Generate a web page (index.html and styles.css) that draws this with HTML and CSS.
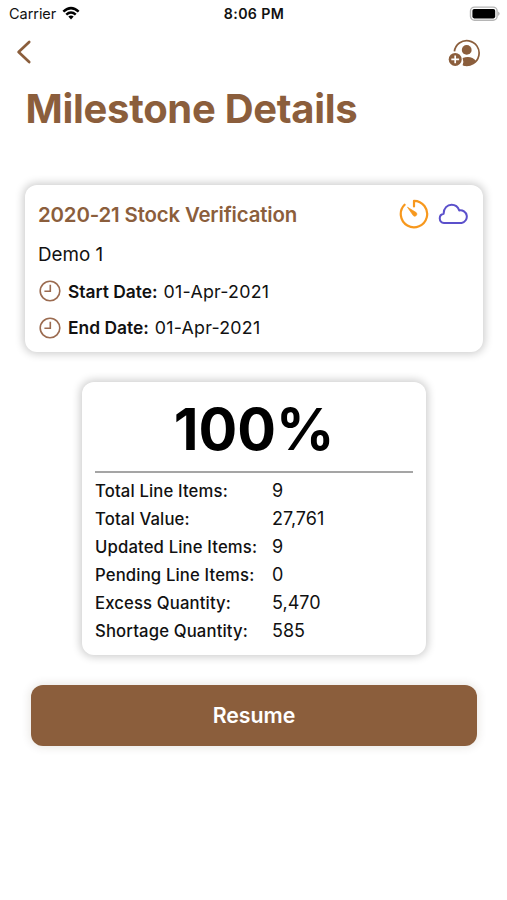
FILE: index.html
```html
<!DOCTYPE html>
<html lang="en">
<head>
<meta charset="utf-8">
<title>Milestone Details</title>
<link rel="stylesheet" href="styles.css">
</head>
<body>
<div class="status">
  <div class="carrier"><span class="carrier-name">Carrier</span>
    <svg class="wifi" viewBox="0 0 18 14" width="18" height="14"><path d="M0.5 4.7Q9-3.1 17.5 4.7L15.8 6.5Q9 0.3 2.2 6.5Z"/><path d="M3.4 7.7Q9 2.8 14.6 7.7L12.9 9.4Q9 6.2 5.1 9.4Z"/><path d="M6.3 10.6Q9 8.5 11.7 10.6L9 13.4Z"/></svg>
  </div>
  <span class="time">8:06 PM</span>
  <svg class="battery" viewBox="0 0 31 16" width="31" height="16"><rect x="1.5" y="1.1" width="26.6" height="13.2" rx="4" fill="#fff" stroke="#b5b5b5" stroke-width="1.4"/><rect x="3.4" y="3" width="22.8" height="9.4" rx="1.8"/><path d="M29.2 5.5Q32 7.7 29.2 9.9Z" fill="#aaa"/></svg>
</div>
<nav class="nav">
  <svg class="back" viewBox="0 0 16 24" width="16" height="24"><path d="M13.2 2 2.6 12 13.2 22"/></svg>
  <svg class="person" viewBox="0 0 33 28" width="33" height="28"><path d="M6.4 12.4A12.4 12.4 0 1 1 15.5 26" fill="none" stroke="currentColor" stroke-width="1.7"/><circle cx="18.7" cy="10.9" r="4.9"/><path d="M14.6 26.3Q16 22.5 14.6 18.9Q23.5 16.2 28 22Q22.5 28 14.6 26.3Z"/><circle cx="7.2" cy="20.4" r="6.5"/><path d="M7.2 16.5V24.3M3.3 20.4H11.1" stroke="#fff" stroke-width="1.7"/></svg>
</nav>
<h1 class="title">Milestone Details</h1>
<section class="card milestone">
  <div class="head">
    <h2 class="name">2020-21 Stock Verification</h2>
    <div class="icons">
      <svg class="timer" viewBox="0 0 30 30" width="30" height="30"><path d="M15 7.5V1.8A13.2 13.2 0 1 1 5.6 5.7" fill="none" stroke="currentColor" stroke-width="2.2" stroke-linecap="round" stroke-linejoin="round"/><path d="M8.5 8.2 17.2 13.6A2 2 0 0 1 14.3 16.6Z" fill="currentColor" stroke="currentColor" stroke-linejoin="round" stroke-width=".7"/></svg>
      <svg class="cloud" viewBox="0 0 30 22" width="30" height="22"><path d="M6 20A4.7 4.7 0 0 1 5.6 10.7C5.6 5 9.4 1.8 13.6 1.8C17.4 1.8 20 4 21.2 7.4A6.4 6.4 0 0 1 23.6 20Z"/></svg>
    </div>
  </div>
  <p class="demo">Demo 1</p>
  <div class="date"><svg class="clock" viewBox="0 0 22 22" width="22" height="22"><circle cx="11" cy="11" r="9.8"/><path d="M11.3 4.8V11.3H5.4"/></svg><b class="start">Start Date:</b><span class="day">01-Apr-2021</span></div>
  <div class="date"><svg class="clock" viewBox="0 0 22 22" width="22" height="22"><circle cx="11" cy="11" r="9.8"/><path d="M11.3 4.8V11.3H5.4"/></svg><b class="end">End Date:</b><span class="day">01-Apr-2021</span></div>
</section>
<section class="card summary">
  <div class="percent">100%</div>
  <dl class="stats">
    <dt>Total Line Items:</dt><dd>9</dd>
    <dt>Total Value:</dt><dd>27,761</dd>
    <dt>Updated Line Items:</dt><dd>9</dd>
    <dt>Pending Line Items:</dt><dd>0</dd>
    <dt>Excess Quantity:</dt><dd>5,470</dd>
    <dt>Shortage Quantity:</dt><dd>585</dd>
  </dl>
</section>
<button class="resume">Resume</button>
</body>
</html>
```
FILE: styles.css
```css
* { box-sizing: border-box; margin: 0; padding: 0; }
body { width: 507px; height: 900px; overflow: hidden; background: #fff; color: #111; font-family: Inter, "Liberation Sans", sans-serif; }
svg { display: block; flex: none; }
.status { height: 28px; display: grid; grid-template-columns: 1fr auto 1fr; align-items: center; padding: 0 7px 0 9px; }
.carrier { display: flex; align-items: center; gap: 6px; font-size: 14.5px; line-height: 28px; letter-spacing: -.05px; }
.wifi { margin-top: -2px; }
.time { font-size: 14.2px; font-weight: 600; letter-spacing: .35px; margin: -2px 1px 0 0; }
.battery { justify-self: end; margin-top: -1px; }
.nav { height: 48px; display: flex; justify-content: space-between; align-items: center; padding: 0 26px 0 16px; color: #8b5e3c; }
.back { fill: none; stroke: currentColor; stroke-width: 2.7; stroke-linecap: round; stroke-linejoin: round; }
.person { fill: currentColor; margin-top: 2px; }
.title { height: 66px; padding-left: 25.5px; font-size: 40px; line-height: 66px; font-weight: 700; letter-spacing: -.3px; color: #8b5e3c; white-space: nowrap; }
.card { background: #fff; border-radius: 12px; box-shadow: 0 0 9px 2px rgba(0, 0, 0, .2); }
.milestone { margin: 43px 24px 0 25px; height: 167px; padding: 12px 14px 0 13px; }
.head { height: 36px; display: flex; justify-content: space-between; align-items: center; }
.name { font-size: 20.4px; line-height: 35px; margin-top: -1px; font-weight: 600; letter-spacing: -.15px; color: #8b5e3c; }
.icons { display: flex; align-items: center; gap: 9px; margin: -2px 1px 0 0; }
.timer { color: #f7981d; }
.cloud { fill: none; stroke: #5b50cb; stroke-width: 2; stroke-linejoin: round; }
.demo { font-size: 18.8px; line-height: 40px; height: 40px; margin-top: 2px; }
.date { display: flex; align-items: center; height: 36.5px; font-size: 17.8px; }
.demo + .date { margin-top: -2px; }
.clock { fill: none; stroke: #9b6b50; stroke-width: 1.6; margin: 0 7px 0 1px; }
.date b { font-size: 17.4px; font-weight: 600; margin-right: 6px; }
.date .day { letter-spacing: .25px; }
.summary { width: 344px; height: 273px; margin: 30px 0 0 82px; padding: 0 13px; }
.percent { height: 91px; border-bottom: 2.5px solid #a5a5a5; text-align: center; font-size: 57.5px; line-height: 94px; font-weight: 700; color: #000; }
.stats { display: grid; grid-template-columns: 177px 1fr; grid-auto-rows: 28.1px; line-height: 28px; padding-top: 4px; }
.stats dt { font-size: 16.7px; font-weight: 500; letter-spacing: .14px; white-space: nowrap; }
.stats dd { font-size: 18px; }
.resume { display: block; width: 446px; height: 61px; margin: 29.5px 0 0 31px; border: 0; border-radius: 12px; background: #8b5e3c; box-shadow: 0 0 10px 1px rgba(60, 40, 20, .12); color: #fff; font: 600 21.3px/61px Inter, sans-serif; }
```
